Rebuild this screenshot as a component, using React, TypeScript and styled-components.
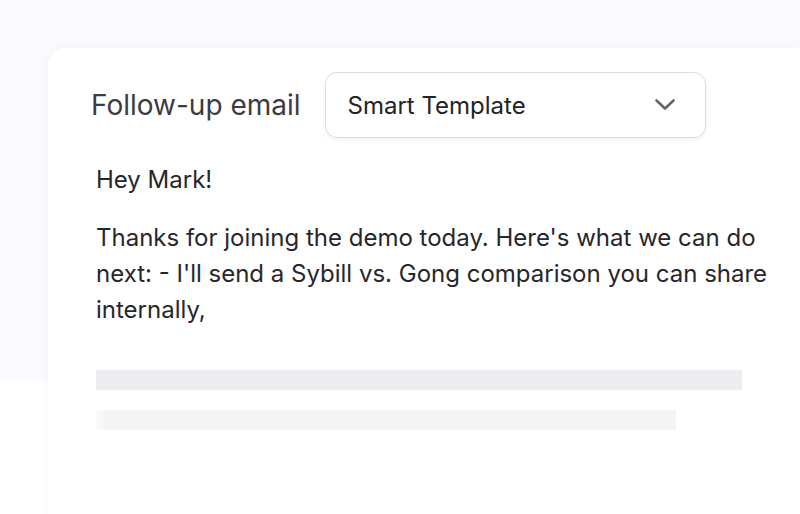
import React from "react";
import styled, { createGlobalStyle } from "styled-components";

const GlobalStyle = createGlobalStyle`
  html, body {
    margin: 0;
    padding: 0;
  }
  body {
    font-family: Inter, "Noto Sans", sans-serif;
    background: linear-gradient(to bottom, #faf9fd 0px, #faf9fd 374px, #ffffff 386px);
    min-height: 514px;
    overflow: hidden;
  }
`;

const Page = styled.div`
  width: 800px;
  height: 514px;
  padding: 48px 0 0 48px;
  box-sizing: border-box;
  overflow: hidden;
`;

const Card = styled.div`
  background: #ffffff;
  border-top-left-radius: 18px;
  height: 100%;
  padding: 24px 0 0 43px;
  box-sizing: border-box;
  box-shadow: -2px 0 6px rgba(120, 110, 170, 0.04);
`;

const Header = styled.div`
  display: flex;
  align-items: center;
  gap: 24px;
`;

const Label = styled.span`
  font-size: 28px;
  color: #3c3b42;
`;

const Select = styled.div`
  width: 381px;
  height: 66px;
  box-sizing: border-box;
  border: 1.5px solid #dcdbe0;
  border-radius: 12px;
  display: flex;
  align-items: center;
  justify-content: space-between;
  padding: 0 28px 0 22px;
  box-shadow: 0 2px 4px rgba(30, 20, 60, 0.06);
`;

const SelectText = styled.span`
  font-size: 24px;
  color: #232227;
`;

const Body = styled.div`
  padding-left: 5px;
  margin-top: 24px;
  color: #27262b;
  font-size: 24px;
  line-height: 36px;
`;

const Para = styled.p`
  margin: 0 0 22px 0;
  max-width: 680px;
`;

const Bars = styled.div`
  display: flex;
  flex-direction: column;
  gap: 20px;
  margin-top: 42px;
`;

const Bar = styled.div<{ w: number; faded?: boolean }>`
  height: 20px;
  width: ${(p) => p.w}px;
  background: ${(p) =>
    p.faded
      ? "linear-gradient(to right, #fbfafc 0px, #f4f3f6 10px, #f4f3f6 100%)"
      : "#edecf0"};
`;

const Chevron = () => (
  <svg width="24" height="24" viewBox="0 0 24 24" fill="none">
    <path
      d="M3.5 7.5 L12 15.5 L20.5 7.5"
      stroke="#66656b"
      strokeWidth="2.6"
      strokeLinecap="round"
      strokeLinejoin="round"
    />
  </svg>
);

export default function App() {
  return (
    <>
      <GlobalStyle />
      <Page>
        <Card>
          <Header>
            <Label>Follow-up email</Label>
            <Select>
              <SelectText>Smart Template</SelectText>
              <Chevron />
            </Select>
          </Header>
          <Body>
            <Para>Hey Mark!</Para>
            <Para>
              Thanks for joining the demo today. Here's what we can do next: - I'll
              send a Sybill vs. Gong comparison you can share internally,
            </Para>
            <Bars>
              <Bar w={646} />
              <Bar w={580} faded />
            </Bars>
          </Body>
        </Card>
      </Page>
    </>
  );
}
